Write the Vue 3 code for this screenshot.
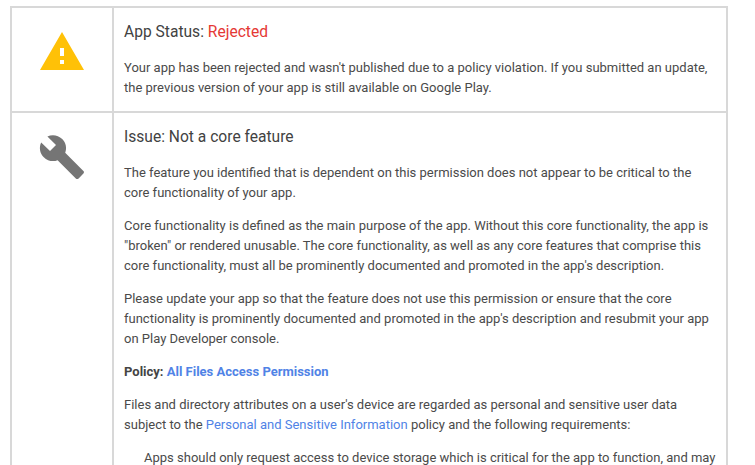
<script setup>
</script>

<template>
  <div class="page">
    <div class="table">
      <div class="row first">
        <div class="icon-cell">
          <svg class="warn" width="48" height="48" viewBox="0 0 24 24"><path fill="#ffc107" d="M1 21h22L12 2 1 21zm12-3h-2v-2h2v2zm0-4h-2v-4h2v4z"/></svg>
        </div>
        <div class="body-cell">
          <h2>App Status: <span class="red">Rejected</span></h2>
          <p>Your app has been rejected and wasn't published due to a policy violation. If you submitted an update, the previous version of your app is still available on Google Play.</p>
        </div>
      </div>
      <div class="row">
        <div class="icon-cell">
          <svg class="wrench" width="48" height="48" viewBox="0 0 24 24"><path fill="#757575" d="M22.7 19l-9.1-9.1c.9-2.3.4-5-1.5-6.9-2-2-5-2.4-7.4-1.3L9 6 6 9 1.6 4.7C.4 7.1.9 10.1 2.9 12.1c1.9 1.9 4.6 2.4 6.9 1.5l9.1 9.1c.4.4 1 .4 1.4 0l2.3-2.3c.5-.4.5-1.1.1-1.4z"/></svg>
        </div>
        <div class="body-cell">
          <h2>Issue: Not a core feature</h2>
          <p>The feature you identified that is dependent on this permission does not appear to be critical to the core functionality of your app.</p>
          <p>Core functionality is defined as the main purpose of the app. Without this core functionality, the app is "broken" or rendered unusable. The core functionality, as well as any core features that comprise this core functionality, must all be prominently documented and promoted in the app's description.</p>
          <p>Please update your app so that the feature does not use this permission or ensure that the core functionality is prominently documented and promoted in the app's description and resubmit your app on Play Developer console.</p>
          <p><b>Policy: <a class="strong-link">All Files Access Permission</a></b></p>
          <p>Files and directory attributes on a user's device are regarded as personal and sensitive user data subject to the <a>Personal and Sensitive Information</a> policy and the following requirements:</p>
          <p class="indent">Apps should only request access to device storage which is critical for the app to function, and may not request access to device storage on behalf of any third party.</p>
        </div>
      </div>
    </div>
  </div>
</template>

<style>
html, body { margin: 0; background: #fff; overflow: hidden; }
</style>

<style scoped>
.page {
  height: 465px;
  overflow: hidden;
  padding: 6px 0 0 10px;
  box-sizing: border-box;
  font-family: Roboto, "Liberation Sans", sans-serif;
  color: #4a4a4a;
}
.table {
  width: 718px;
  box-sizing: border-box;
  border: 2px solid #d8d8d8;
  border-bottom: 0;
}
.row {
  display: grid;
  grid-template-columns: 102px 1fr;
}
.row.first {
  height: 103px;
  border-bottom: 2px solid #d8d8d8;
}
.icon-cell {
  border-right: 2px solid #d8d8d8;
  display: flex;
  justify-content: center;
  align-items: flex-start;
}
.warn { margin-top: 20px; }
.wrench { margin-top: 20px; }
.body-cell { padding: 14px 10px 0 10px; }
h2 {
  margin: 0 0 16px;
  font-size: 15.6px;
  font-weight: 400;
  line-height: 20px;
  color: #424242;
}
.red { color: #e53935; }
p {
  margin: 0 0 13px;
  font-size: 13px;
  line-height: 20px;
}
a { color: #5083e6; }
.strong-link { font-weight: 700; }
b { font-weight: 700; color: #444; }
.indent { padding-left: 20px; }
</style>
